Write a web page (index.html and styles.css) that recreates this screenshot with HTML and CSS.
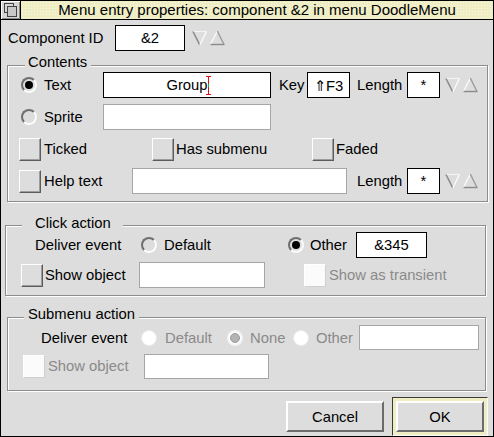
FILE: index.html
```html
<!DOCTYPE html>
<html>
<head>
<meta charset="utf-8">
<link rel="stylesheet" href="styles.css">
</head>
<body>
<div class="window">
  <div class="titlebar">
    <div class="back">
      <svg width="19" height="18" viewBox="0 0 19 18">
        <rect x="3.5" y="2.5" width="9" height="9" fill="none" stroke="#444"/>
        <rect x="6.5" y="5.5" width="9" height="10" fill="#c8c8c8" stroke="#444"/>
      </svg>
    </div>
    <div class="title">Menu entry properties: component &amp;2 in menu DoodleMenu</div>
  </div>

  <div class="idrow">
    <span class="lbl id-lbl">Component ID</span>
    <div class="field id-field">&amp;2</div>
    <svg class="adjust id-adjust" width="34" height="16" viewBox="0 0 34 16">
      <path d="M1 1.5 H14.5" stroke="#f4f4f4" stroke-width="1.2" fill="none"/>
      <path d="M1 1.5 L7.8 15" stroke="#8a8a8a" stroke-width="1.6" fill="none"/>
      <path d="M14.5 1.5 L7.8 15" stroke="#fafafa" stroke-width="1.4" fill="none"/>
      <path d="M18.5 14.5 L25.3 1" stroke="#fafafa" stroke-width="1.4" fill="none"/>
      <path d="M25.3 1 L32 14.5" stroke="#9a9a9a" stroke-width="1.4" fill="none"/>
      <path d="M18.5 14.5 H32.5" stroke="#8a8a8a" stroke-width="1.4" fill="none"/>
    </svg>
  </div>

  <div class="frame contents">
    <span class="legend contents-legend">Contents</span>
    <div class="row crow">
      <span class="radio on c-radio"></span>
      <span class="lbl opt-lbl">Text</span>
      <div class="field text-field">Group<span class="caret"></span></div>
      <span class="lbl key-lbl">Key</span>
      <div class="field key-field">&#x21D1;F3</div>
      <span class="lbl len-lbl">Length</span>
      <div class="field len-field">*</div>
      <svg class="adjust len-adjust" width="34" height="16" viewBox="0 0 34 16">
        <path d="M1 1.5 H14.5" stroke="#f4f4f4" stroke-width="1.2" fill="none"/>
        <path d="M1 1.5 L7.8 15" stroke="#8a8a8a" stroke-width="1.6" fill="none"/>
        <path d="M14.5 1.5 L7.8 15" stroke="#fafafa" stroke-width="1.4" fill="none"/>
        <path d="M18.5 14.5 L25.3 1" stroke="#fafafa" stroke-width="1.4" fill="none"/>
        <path d="M25.3 1 L32 14.5" stroke="#9a9a9a" stroke-width="1.4" fill="none"/>
        <path d="M18.5 14.5 H32.5" stroke="#8a8a8a" stroke-width="1.4" fill="none"/>
      </svg>
    </div>
    <div class="row crow">
      <span class="radio c-radio"></span>
      <span class="lbl opt-lbl">Sprite</span>
      <div class="field grey sprite-field"></div>
    </div>
    <div class="row crow">
      <span class="check c-check"></span>
      <span class="lbl ticked-lbl">Ticked</span>
      <span class="check"></span>
      <span class="lbl sub-lbl">Has submenu</span>
      <span class="check"></span>
      <span class="lbl faded-lbl">Faded</span>
    </div>
    <div class="row crow">
      <span class="check c-check"></span>
      <span class="lbl help-lbl">Help text</span>
      <div class="field grey help-field"></div>
      <span class="lbl len-lbl help-len">Length</span>
      <div class="field len-field">*</div>
      <svg class="adjust len-adjust" width="34" height="16" viewBox="0 0 34 16">
        <path d="M1 1.5 H14.5" stroke="#f4f4f4" stroke-width="1.2" fill="none"/>
        <path d="M1 1.5 L7.8 15" stroke="#8a8a8a" stroke-width="1.6" fill="none"/>
        <path d="M14.5 1.5 L7.8 15" stroke="#fafafa" stroke-width="1.4" fill="none"/>
        <path d="M18.5 14.5 L25.3 1" stroke="#fafafa" stroke-width="1.4" fill="none"/>
        <path d="M25.3 1 L32 14.5" stroke="#9a9a9a" stroke-width="1.4" fill="none"/>
        <path d="M18.5 14.5 H32.5" stroke="#8a8a8a" stroke-width="1.4" fill="none"/>
      </svg>
    </div>
  </div>

  <div class="frame click">
    <span class="legend click-legend">Click action</span>
    <div class="row arow">
      <span class="lbl deliver-lbl">Deliver event</span>
      <span class="radio"></span>
      <span class="lbl cdef-lbl">Default</span>
      <span class="radio on"></span>
      <span class="lbl cother-lbl">Other</span>
      <div class="field event-field">&amp;345</div>
    </div>
    <div class="row arow">
      <span class="check cshow-check"></span>
      <span class="lbl cshow-lbl">Show object</span>
      <div class="field grey cshow-field"></div>
      <span class="check dis trans-check"></span>
      <span class="lbl faded trans-lbl">Show as transient</span>
    </div>
  </div>

  <div class="frame submenu">
    <span class="legend sub-legend">Submenu action</span>
    <div class="row srow1">
      <span class="lbl sdeliver-lbl">Deliver event</span>
      <span class="radio dis"></span>
      <span class="lbl faded sdef-lbl">Default</span>
      <span class="radio none"></span>
      <span class="lbl faded snone-lbl">None</span>
      <span class="radio dis"></span>
      <span class="lbl faded sother-lbl">Other</span>
      <div class="field grey sother-field"></div>
    </div>
    <div class="row srow2">
      <span class="check dis sshow-check"></span>
      <span class="lbl faded sshow-lbl">Show object</span>
      <div class="field grey sshow-field"></div>
    </div>
  </div>

  <div class="buttons">
    <div class="btn cancel">Cancel</div>
    <div class="default-ring"><div class="btn ok">OK</div></div>
  </div>
</div>
</body>
</html>
```

FILE: styles.css
```css
html, body {
  margin: 0;
  padding: 0;
  background: #dddddd;
}

body {
  font-family: "Liberation Sans", Arial, "DejaVu Sans", sans-serif;
  font-size: 14.8px;
  color: #000;
}

.window {
  width: 494px;
  height: 437px;
  box-sizing: border-box;
  border: 1px solid #000;
  background: #dddddd;
  display: flex;
  flex-direction: column;
}

.titlebar {
  display: flex;
  height: 19px;
  box-sizing: border-box;
  border-bottom: 1px solid #000;
  flex: none;
}

.back {
  width: 19px;
  border-right: 1px solid #000;
  background: #d6d6d6;
  box-shadow: inset 1px 1px #fff, inset -1px -1px #8c8c8c;
  display: flex;
  align-items: center;
  justify-content: center;
}

.back svg {
  display: block;
}

.title {
  flex: 1;
  background-color: #eeedc4;
  background-image: radial-gradient(circle, rgba(255,255,255,0.55) 0.6px, transparent 0.9px);
  background-size: 3px 3px;
  display: flex;
  align-items: center;
  justify-content: center;
  font-size: 15px;
  line-height: 18px;
  white-space: nowrap;
}

.lbl {
  white-space: nowrap;
  flex: none;
  line-height: 18px;
}

.faded {
  color: #8a8a8a;
}

.idrow {
  display: flex;
  align-items: center;
  height: 26px;
  margin-top: 5px;
  padding-left: 7px;
  flex: none;
}

.id-lbl { width: 107px; }
.id-field { width: 70px; }
.id-adjust { margin-left: 7px; }

.adjust {
  display: block;
  flex: none;
}

.field {
  height: 26px;
  box-sizing: border-box;
  background: #fff;
  border: 1px solid #000;
  display: flex;
  align-items: center;
  justify-content: center;
  flex: none;
  white-space: nowrap;
}

.field.grey {
  border-color: #a6a6a6;
}

.caret {
  display: inline-block;
  width: 5px;
  height: 19px;
  margin-left: -2px;
  margin-right: -3px;
  background:
    linear-gradient(#19c419, #19c419) center / 1px 3px no-repeat,
    linear-gradient(#e01010, #e01010) center / 1px 100% no-repeat,
    linear-gradient(#e01010, #e01010) top / 5px 1px no-repeat,
    linear-gradient(#e01010, #e01010) bottom / 5px 1px no-repeat;
}

.frame {
  position: relative;
  box-sizing: border-box;
  border: 1px solid #8c8c8c;
  box-shadow: inset 1px 1px #fff, 1px 1px #fff;
  flex: none;
}

.legend {
  position: absolute;
  top: -13px;
  background: #dddddd;
  line-height: 18px;
  white-space: nowrap;
}

.contents {
  margin: 14px 0 0 6px;
  width: 481px;
  padding: 3px 0 4px;
}

.contents-legend {
  left: 17px;
  padding: 0 4px 0 3px;
}

.click {
  margin: 23px 0 0 4px;
  width: 481px;
  padding: 4px 0 5px;
}

.click-legend {
  top: -12px;
  left: 16px;
  padding: 0 12px 0 13px;
}

.submenu {
  margin: 21px 0 0 6px;
  width: 479px;
  padding: 5px 0 10px;
}

.sub-legend {
  left: 16px;
  padding: 0 4px;
}

.row {
  display: flex;
  align-items: center;
}

.crow { height: 32px; }
.arow { height: 30px; }
.srow1 { height: 29px; }
.srow2 { height: 28px; }

.radio {
  position: relative;
  width: 16px;
  height: 16px;
  box-sizing: border-box;
  border-radius: 50%;
  border: 2px solid;
  border-color: #6e6e6e #fbfbfb #fbfbfb #6e6e6e;
  background: #dddddd;
  flex: none;
}

.radio.on::after {
  content: "";
  position: absolute;
  inset: 2px;
  border-radius: 50%;
  background: #000;
}

.radio.dis {
  background: #fff;
  border: 1px solid #ececec;
}

.radio.none {
  background: #fff;
  border: 2px solid #f4f4f4;
}

.radio.none::after {
  content: "";
  position: absolute;
  inset: 1px;
  border-radius: 50%;
  background: #b4b4b4;
  border: 1px solid #9a9a9a;
  box-sizing: border-box;
}

.check {
  width: 22px;
  height: 23px;
  box-sizing: border-box;
  border: 1px solid;
  border-color: #fff #5c5c5c #5c5c5c #fff;
  box-shadow: inset -1px -1px #9c9c9c;
  background: #dddddd;
  flex: none;
}

.check.dis {
  background: #fbfbfb;
  border-color: #fff #cfcfcf #cfcfcf #fff;
  box-shadow: none;
}

/* Contents rows */
.c-radio { margin-left: 13px; }
.opt-lbl { margin-left: 7px; width: 59px; }
.text-field { width: 168px; }
.key-lbl { margin-left: 8px; width: 28px; }
.key-field { width: 43px; }
.len-lbl { margin-left: 7px; width: 50px; }
.len-field { width: 33px; }
.len-adjust { margin-left: 5px; }
.sprite-field { width: 168px; }

.c-check { margin-left: 11px; }
.ticked-lbl { margin-left: 3px; width: 108px; }
.sub-lbl { margin-left: 2px; width: 136px; }
.faded-lbl { margin-left: 2px; }
.help-lbl { margin-left: 3px; width: 88px; }
.help-field { width: 215px; }
.help-len { margin-left: 10px; }

/* Click action */
.deliver-lbl { margin-left: 29px; width: 106px; }
.cdef-lbl { margin-left: 7px; width: 124px; }
.cother-lbl { margin-left: 6px; width: 46px; }
.event-field { width: 71px; }
.cshow-check { margin-left: 15px; }
.cshow-lbl { margin-left: 2px; width: 94px; }
.cshow-field { width: 126px; }
.trans-check { margin-left: 39px; }
.trans-lbl { margin-left: 3px; }

/* Submenu action */
.sdeliver-lbl { margin-left: 33px; width: 100px; }
.sdef-lbl { margin-left: 8px; width: 62px; }
.snone-lbl { margin-left: 7px; width: 43px; }
.sother-lbl { margin-left: 7px; width: 43px; }
.sother-field { width: 120px; height: 25px; }
.sshow-check { margin-left: 15px; }
.sshow-lbl { margin-left: 3px; width: 96px; }
.sshow-field { width: 125px; height: 25px; }

/* Buttons */
.buttons {
  display: flex;
  justify-content: flex-end;
  align-items: center;
  gap: 8px;
  margin-top: 6px;
  padding-right: 5px;
  flex: none;
}

.btn {
  height: 31px;
  box-sizing: border-box;
  background: #dddddd;
  border: 2px solid;
  border-color: #fff #6b6b6b #6b6b6b #fff;
  display: flex;
  align-items: center;
  justify-content: center;
  line-height: 18px;
}

.cancel {
  width: 98px;
}

.default-ring {
  padding: 3px;
  background: #eeedc4;
  border: 1px solid;
  border-color: #3a3a3a #fafafa #fafafa #3a3a3a;
}

.ok {
  width: 88px;
}
```
